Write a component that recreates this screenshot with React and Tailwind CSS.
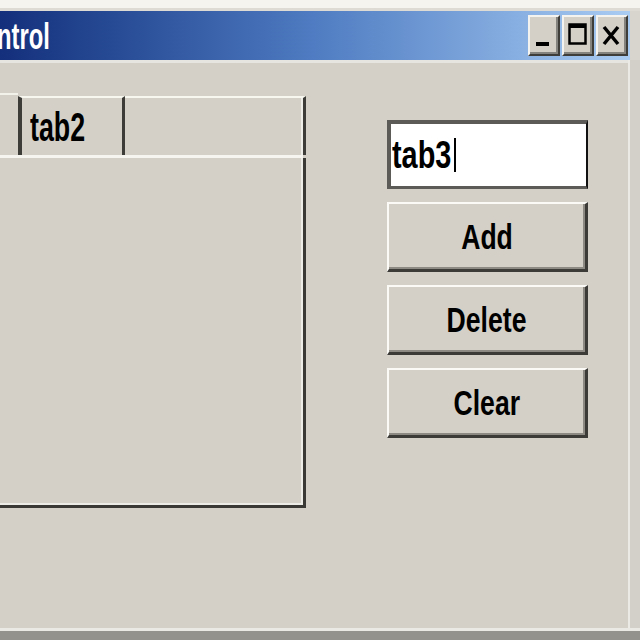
import React from "react";

const font = { fontFamily: '"Liberation Sans", Arial, sans-serif' };

function WinButton({ label, scale }) {
  return (
    <div className="relative h-[70px] w-full bg-[#d4d0c8] border-t-2 border-l-2 border-t-[#fbfaf6] border-l-[#fbfaf6] border-b-[3px] border-r-[3px] border-b-[#3c3b38] border-r-[#3c3b38] shadow-[inset_-2px_-2px_0_#8d8a84] flex items-center justify-center">
      <span className="text-[35px] font-bold text-black leading-none scale-x-[0.76] inline-block" style={font}>
        {label}
      </span>
    </div>
  );
}

function TitleButton({ children }) {
  return (
    <div className="w-[32px] h-[41px] bg-[#d4d0c8] border-t-2 border-l-2 border-t-[#f4f3ef] border-l-[#f4f3ef] border-b-2 border-r-2 border-b-[#3e3d3a] border-r-[#3e3d3a] shadow-[inset_-2px_-2px_0_#85837e] flex items-center justify-center">
      {children}
    </div>
  );
}

export default function App() {
  return (
    <div className="w-[640px] h-[640px] bg-[#d4d0c8] flex flex-col overflow-hidden" style={font}>
      {/* top frame */}
      <div className="h-[8px] bg-[#f5f4ef]" />
      <div className="h-[3px] bg-[#dedbd4]" />
      {/* title row */}
      <div className="h-[49px] flex">
        <div className="flex-1 flex items-center justify-between bg-gradient-to-r from-[#142f7c] via-[#4f7cc2] to-[#a9ccf2]">
          <span className="text-[36px] font-bold text-white leading-none -ml-[3px] mt-[2px] scale-x-[0.66] origin-left inline-block">
            ntrol
          </span>
          <div className="flex gap-[2px] pr-[2px]">
            <TitleButton>
              <svg width="28" height="37" viewBox="0 0 28 37">
                <rect x="6" y="25" width="13" height="4" fill="#000" />
              </svg>
            </TitleButton>
            <TitleButton>
              <svg width="28" height="37" viewBox="0 0 28 37">
                <rect x="5.5" y="7.5" width="16" height="19" fill="none" stroke="#000" strokeWidth="2.5" />
                <rect x="5" y="7" width="17" height="4" fill="#000" />
              </svg>
            </TitleButton>
            <TitleButton>
              <svg width="28" height="37" viewBox="0 0 28 37">
                <path d="M6 10 L20 27 M20 10 L6 27" stroke="#000" strokeWidth="3.5" />
              </svg>
            </TitleButton>
          </div>
        </div>
        <div className="w-[10px] bg-[#d8d5ce]" />
      </div>
      {/* body */}
      <div className="flex-1 flex">
        <div className="flex-1 flex flex-col border-t-[3px] border-t-[#e7e5df]">
          <div className="flex pt-[33px]">
            {/* tab control */}
            <div className="w-[306px] h-[412px] flex flex-col">
              <div className="h-[59px] flex">
                <div className="w-[18px] border-t-2 border-t-[#f3f2ea] mt-[-3px]" />
                <div className="w-[107px] border-l-4 border-l-[#3d3c39] border-t-2 border-t-[#f7f7f0] border-r-[3px] border-r-[#3d3c39] flex items-center pl-[8px]">
                  <span className="text-[40px] font-bold text-black leading-none scale-x-[0.67] origin-left inline-block">
                    tab2
                  </span>
                </div>
                <div className="flex-1 border-t-2 border-t-[#f7f7f0] border-r-[3px] border-r-[#3d3c39] shadow-[inset_-2px_0_0_#eeede7]" />
              </div>
              <div className="h-[3px] bg-[#f6f5f0] mr-[3px]" />
              <div className="flex-1 border-r-[3px] border-b-[3px] border-r-[#3a3936] border-b-[#3a3936] shadow-[inset_-2px_-2px_0_#eeece6]" />
            </div>
            {/* right column */}
            <div className="ml-[81px] w-[201px] pt-[24px] flex flex-col gap-[13px]">
              <div className="h-[69px] bg-white border-t-4 border-l-4 border-b-[3px] border-t-[#5c5b58] border-l-[#5c5b58] border-b-[#5c5b58] border-r-2 border-r-[#111] flex items-center pl-[1px]">
                <span className="text-[38px] font-bold text-black leading-none scale-x-[0.76] origin-left inline-block">
                  tab3
                </span>
                <span className="w-[2px] h-[34px] bg-black -ml-[16px]" />
              </div>
              <WinButton label="Add" />
              <WinButton label="Delete" />
              <WinButton label="Clear" />
            </div>
          </div>
        </div>
        <div className="w-[12px] border-l-2 border-l-[#eceae4] bg-[#d3d0c9]" />
      </div>
      {/* bottom frame */}
      <div className="h-[3px] bg-[#ebe9e3]" />
      <div className="h-[9px] bg-[#94928d]" />
    </div>
  );
}
